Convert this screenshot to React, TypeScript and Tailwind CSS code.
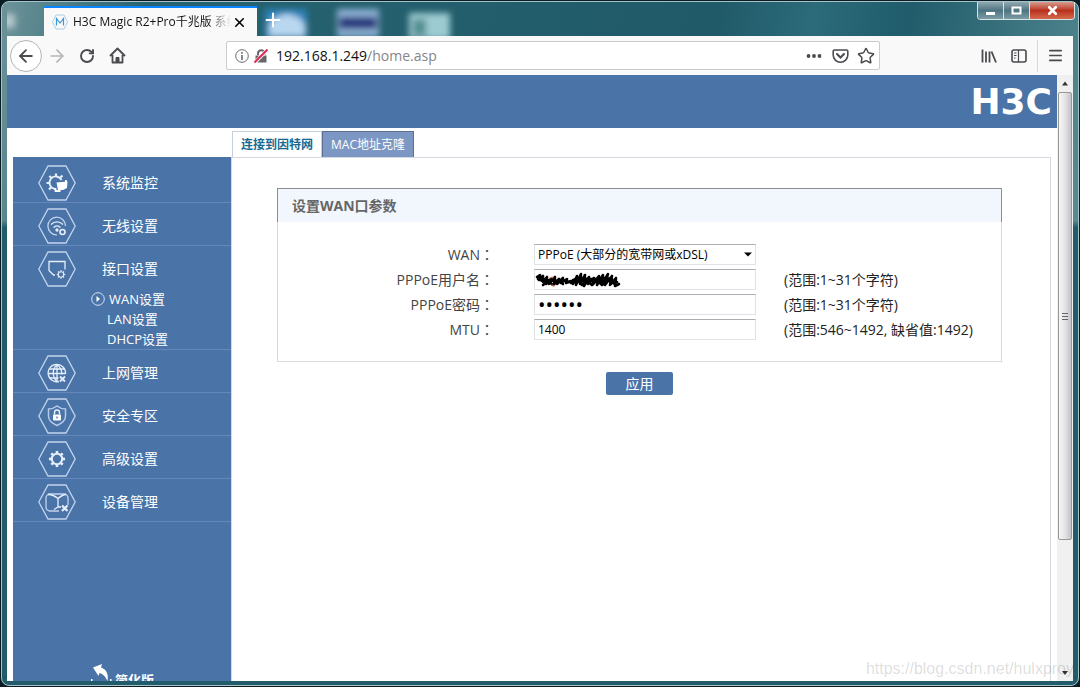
import React, { ReactNode, useState } from "react";
import { ArrowLeft, ArrowRight, Menu, Plus, RotateCw, Star, X } from "lucide-react";

const gearTeeth = [0, 45, 90, 135, 180, 225, 270, 315];

const Gear = ({ x, y, r }: { x: number; y: number; r: number }) => (
  <g transform={`translate(${x} ${y})`}>
    <circle r={r} fill="none" strokeWidth={r * 0.4} />
    {gearTeeth.map((angle) => (
      <path
        key={angle}
        d={`M0 ${-r * 1.1}V${-r * 1.55}`}
        strokeWidth={r * 0.5}
        transform={`rotate(${angle})`}
      />
    ))}
  </g>
);

const HexIcon = ({ children }: { children: ReactNode }) => (
  <svg
    width="38"
    height="36"
    viewBox="0 0 38 36"
    fill="none"
    stroke="#e6eefa"
    strokeWidth="1.3"
    aria-hidden="true"
  >
    <path d="M.8 18 10 1h18l9.200 17L28 35H10Z" stroke="#c3d4ee" />
    {children}
  </svg>
);

const menuIcons: Record<string, ReactNode> = {
  monitor: (
    <>
      <path d="M23.500 15a6.300 6.300 0 1 0-6.500 9" strokeWidth="1.800" />
      <path
        d="M18 11.500V8.500M13.500 13l-2.200-2M11.500 18H8.500M13 22.500 11 24.500M22.500 12.500l2-2"
        strokeWidth="2.200"
      />
      <path d="M18.500 17.500 29.500 16.500l-.5 6.500-4 2h-5Z" fill="#fff" stroke="none" />
      <path d="M17.500 23v3h5M28 15v3" stroke="#fff" strokeWidth="1.800" />
    </>
  ),
  wifi: (
    <>
      <path d="M27.500 18A8.800 8.800 0 1 0 19 26.800" stroke="#c3d4ee" />
      <path d="M13 16.500c3.500-3.500 8.500-3.500 12 0M15.500 19.500c2-2 5-2 7 0" />
      <circle cx="19" cy="22" r="1" fill="#fff" />
      <circle cx="24.500" cy="24" r="2.500" strokeWidth="1.600" />
    </>
  ),
  port: (
    <>
      <path d="M27 18.500V10.500H11V19.500l4.500 4.500h1.500" />
      <Gear x={23} y={23.5} r={2.7} />
    </>
  ),
  globe: (
    <>
      <path d="M27.500 19A8.700 8.700 0 1 0 21 26.500" />
      <path d="M19 9.500V27M19 9.500c-5 5-5 12 0 17.500M19 9.500c4 3 5 7 4.500 10M11.500 14h15M10.500 18.500h17M11.500 23h9" />
      <path d="m22 21.500 5 5M27 21.500l-5 5" strokeWidth="1.800" />
    </>
  ),
  shield: (
    <>
      <path
        d="M19 8c2.500 2 5 3 8.500 3v7c0 4-4 7.500-8.500 9.500-4.500-2-8.500-5.500-8.500-9.500v-7C14 11 16.500 10 19 8Z"
        stroke="#b6cae9"
        strokeWidth="1.500"
      />
      <path d="M16.500 16.500v-2a2.500 2.500 0 0 1 5 0v2" strokeWidth="1.500" />
      <rect x="15" y="16.500" width="8" height="6" rx="1" fill="#fff" stroke="none" />
      <path d="M19 18.500v2" stroke="#4a73a7" />
    </>
  ),
  gear: <Gear x={19} y={18} r={5.2} />,
  device: (
    <>
      <path
        d="M21 27h-9a4 4 0 0 1-4-4v-9a4 4 0 0 1 4-4h14a4 4 0 0 1 4 4v7"
        stroke="#c3d4ee"
      />
      <path d="M10 10.500c4 0 7 1.500 10 4 3-2.500 5-4 8-4M20 14.500V23M20 23l-4 2.500M20 23h3" />
      <path d="m24 21.500 5.500 5.500M29.500 21.500 24 27" strokeWidth="2.200" />
    </>
  ),
};

const menu = [
  { label: "系统监控", icon: "monitor" },
  { label: "无线设置", icon: "wifi" },
  { label: "接口设置", icon: "port", children: ["WAN设置", "LAN设置", "DHCP设置"] },
  { label: "上网管理", icon: "globe" },
  { label: "安全专区", icon: "shield" },
  { label: "高级设置", icon: "gear" },
  { label: "设备管理", icon: "device" },
];

const TitleBar = () => (
  <div className="relative flex h-[34px] shrink-0 items-start">
    <svg className="absolute inset-0 h-full w-full" aria-hidden="true">
      <defs>
        <filter id="soft" x="-30%" y="-30%" width="160%" height="160%">
          <feGaussianBlur stdDeviation="3" />
        </filter>
      </defs>
      <g filter="url(#soft)">
        <path d="M-6 12h14v14H-6Z" fill="#d4e0e2" opacity=".7" />
        <rect x="258" y="7" width="42" height="30" fill="#2b83bb" />
        <path d="M262 22q18-20 36 0v12h-36Z" fill="#b9d8f0" />
        <rect x="330" y="7" width="42" height="28" fill="#8db0d4" />
        <path d="M332 15h38v12h-38Z" fill="#25387c" />
        <rect x="402" y="11" width="41" height="26" fill="#9ccbd2" />
        <path d="M406 17h13v17h-13Z" fill="#538f92" />
      </g>
    </svg>

    <div className="relative ml-[37px] mt-1 flex h-[30px] w-[213px] items-center border-t-2 border-[#0a84ff] bg-[#f9f9fa] pl-2">
      <svg width="16" height="18" viewBox="0 0 16 18" fill="none" aria-hidden="true">
        <path d="M4 2h8l3.500 7-3.500 7H4L.5 9Z" stroke="#a9cfe9" />
        <path d="M4.500 12.500v-7L8 10l3.500-4.500v7" stroke="#3f97d2" strokeWidth="1.200" />
      </svg>
      <span className="ml-[5px] w-[158px] overflow-hidden text-xs whitespace-nowrap text-[#111] [mask-image:linear-gradient(to_right,black_84%,transparent)]">
        H3C Magic R2+Pro千兆版 系统
      </span>
      <button aria-label="关闭标签页" className="ml-px">
        <X size={15} strokeWidth={2.5} />
      </button>
    </div>
    <button aria-label="新建标签页" className="relative ml-[5px] mt-[7px] text-white">
      <Plus size={22} strokeWidth={2.2} />
    </button>

    <div className="relative -mr-0.5 ml-auto flex h-[18px] overflow-hidden rounded-b border border-t-0 border-[#d6e2e5]">
      <button
        aria-label="最小化"
        className="flex w-[26px] items-center justify-center border-r border-[#d6e2e5] bg-linear-to-b from-[#91a9b0] via-[#4e7482] to-[#7d9da6]"
      >
        <svg width="11" height="10" viewBox="0 0 11 10">
          <path d="M1 6h9v3H1Z" fill="#fff" />
        </svg>
      </button>
      <button
        aria-label="最大化"
        className="flex w-[26px] items-center justify-center border-r border-[#d6e2e5] bg-linear-to-b from-[#91a9b0] via-[#4e7482] to-[#7d9da6]"
      >
        <svg width="11" height="10" viewBox="0 0 11 10" fill="none">
          <path d="M1.500 1.500h8v6h-8Z" stroke="#fff" strokeWidth="2" />
        </svg>
      </button>
      <button
        aria-label="关闭"
        className="flex w-11 items-center justify-center bg-linear-to-b from-[#d59a8e] via-[#b92f1c] to-[#d4694c] text-white"
      >
        <X size={13} strokeWidth={5} />
      </button>
    </div>
  </div>
);

const Toolbar = () => (
  <div className="flex h-[39px] shrink-0 items-center bg-[#f9f9fa] text-[#4a4a4f]">
    <button
      aria-label="后退"
      className="ml-[3px] flex size-8 items-center justify-center rounded-full border border-[#b5b5b6] bg-white"
    >
      <ArrowLeft size={20} strokeWidth={2.2} />
    </button>
    <button aria-label="前进" className="flex w-[30px] justify-center text-[#b5b5b8]">
      <ArrowRight size={20} />
    </button>
    <button aria-label="刷新" className="flex w-[30px] justify-center">
      <RotateCw size={16} strokeWidth={2.8} />
    </button>
    <button aria-label="主页" className="flex w-[30px] justify-center">
      <svg width="17" height="17" viewBox="0 0 17 17" fill="none" stroke="currentColor" strokeWidth="1.800">
        <path d="m1 9 7.500-7.500L16 9M3.500 8v7.500h10V8" strokeLinejoin="round" />
        <path d="M7 15v-4.500h3V15Z" fill="currentColor" strokeWidth="1" />
      </svg>
    </button>

    <div className="ml-[94px] flex h-[29px] flex-1 items-center rounded-xs border border-[#cbcbcc] bg-white px-2">
      <svg width="14" height="14" viewBox="0 0 14 14" fill="none" stroke="#6a6a6e" aria-hidden="true">
        <circle cx="7" cy="7" r="6.300" />
        <path d="M7 6v5M7 3v1.800" strokeWidth="1.600" />
      </svg>
      <svg className="ml-1" width="16" height="16" viewBox="0 0 16 16" fill="none" aria-hidden="true">
        <path d="M5 7V5a3.300 3.300 0 0 1 6.500 0v2" stroke="#66666a" strokeWidth="2" />
        <path d="M2.500 7.500h11v7h-11Z" fill="#66666a" />
        <path d="M1 15.500 15 1" stroke="#fff" strokeWidth="3.500" />
        <path d="M1.500 14.500 14.500 1.500" stroke="#e22850" strokeWidth="2" />
      </svg>
      <div className="ml-[7px] flex-1 text-sm text-[#111]">
        192.168.1.249<span className="text-[#858589]">/home.asp</span>
      </div>
      <button aria-label="页面操作">
        <svg width="16" height="16" viewBox="0 0 16 16" fill="currentColor">
          <circle cx="2.500" cy="8" r="1.900" />
          <circle cx="8" cy="8" r="1.900" />
          <circle cx="13.500" cy="8" r="1.900" />
        </svg>
      </button>
      <button aria-label="保存到 Pocket" className="ml-[10px]">
        <svg width="17" height="16" viewBox="0 0 17 16" fill="none" stroke="currentColor" strokeWidth="1.600">
          <path d="M2.500 2h12a1.300 1.300 0 0 1 1.300 1.300V7a7.300 7.300 0 0 1-14.600 0V3.300A1.300 1.300 0 0 1 2.500 2Z" />
          <path d="m5 6 3.500 3.500L12 6" strokeWidth="2" strokeLinecap="round" />
        </svg>
      </button>
      <button aria-label="添加书签" className="ml-2 -mr-1">
        <Star size={18} />
      </button>
    </div>

    <button aria-label="我的足迹" className="ml-[94px] flex w-[30px] justify-center">
      <svg width="16" height="16" viewBox="0 0 16 16" fill="none" stroke="currentColor" strokeWidth="1.800">
        <path d="M1.500 1.500v13M5 3.500v11M8.500 3.500v11M10.500 3.500l4.500 11" />
      </svg>
    </button>
    <button aria-label="侧栏" className="mr-[3px] flex w-[30px] justify-center">
      <svg width="16" height="14" viewBox="0 0 16 14" fill="none" stroke="currentColor" strokeWidth="1.600">
        <rect x="1" y="1" width="14" height="12" rx="2" />
        <path d="M7.500 1v12M3 4h2.500M3 6.500h2.500M3 9h1.500" strokeWidth="1.200" />
      </svg>
    </button>
    <button
      aria-label="打开菜单"
      className="flex h-8 w-9 items-center justify-center border-l border-[#d7d7db]"
    >
      <Menu size={17} strokeWidth={2.4} />
    </button>
  </div>
);

const Sidebar = () => (
  <nav className="ml-[6px] flex w-[218px] shrink-0 flex-col overflow-hidden bg-[#4a73a7] pt-[3px] text-white">
    {menu.map((item) => (
      <div key={item.label} className="border-b border-[#6488bb]">
        <a href="#" className="flex h-[42px] items-center pt-1 pl-[25px] text-sm">
          <HexIcon>{menuIcons[item.icon]}</HexIcon>
          <span className="ml-[26px]">{item.label}</span>
        </a>
        {item.children && (
          <ul className="pt-px text-[13px] leading-5">
            {item.children.map((child, i) => (
              <li key={child}>
                <a href="#" className="flex items-center pl-[78px]">
                  {i === 0 ? (
                    <svg className="mr-1" width="14" height="14" viewBox="0 0 14 14" aria-hidden="true">
                      <circle cx="7" cy="7" r="6.300" fill="none" stroke="#d7e3f5" />
                      <path d="m5.500 4 3.500 3-3.500 3Z" fill="#fff" />
                    </svg>
                  ) : (
                    <span className="w-4" />
                  )}
                  {child}
                </a>
              </li>
            ))}
          </ul>
        )}
      </div>
    ))}
    <a href="#" className="mt-auto flex h-[18px] shrink-0 items-start pl-[78px] text-[13px] font-bold">
      <svg width="22" height="22" viewBox="0 0 22 22" className="shrink-0" aria-hidden="true">
        <path d="M2 4.500 11 1 10 4.500C15 6 18 11 16.500 18 14 13 12 11 8.500 10L7.500 13Z" fill="#fff" />
        <path d="M0 16h1.500v3H0ZM19 16h1.500v3H19Z" fill="#fff" />
      </svg>
      <span className="mt-2 ml-[2px]">简化版</span>
    </a>
  </nav>
);

const fieldClass =
  "block h-[21px] w-full border border-[#e0e2e6] border-t-[#abadb3] bg-white px-[3px] text-black outline-none";

const Row = ({
  id,
  label,
  hint,
  children,
}: {
  id: string;
  label: string;
  hint?: string;
  children: ReactNode;
}) => (
  <div className="grid h-[25px] grid-cols-[256px_222px_1fr] items-center text-sm">
    <label htmlFor={id} className="pr-10 text-right text-[#444]">
      {label}
      <span className="font-['Noto_Sans_CJK_TC',sans-serif] leading-none">：</span>
    </label>
    <div className="relative">{children}</div>
    <span className="pl-7 whitespace-nowrap text-[#222]">{hint}</span>
  </div>
);

const WanForm = () => {
  const [mode, setMode] = useState("pppoe");
  const [user, setUser] = useState("");
  const [password, setPassword] = useState("123456");
  const [mtu, setMtu] = useState("1400");

  return (
    <form className="mr-12 ml-[45px] mt-[30px]" onSubmit={(e) => e.preventDefault()}>
      <div className="border border-[#d9d9d9]">
        <h2 className="-mx-px -mt-px flex h-[34px] items-center border border-b-0 border-[#8b8d92] bg-[#f2f7fe] pl-[14px] text-sm font-bold text-[#666]">
          设置WAN口参数
        </h2>
        <div className="pt-5 pb-[19px]">
          <Row id="wan" label="WAN">
            <select
              id="wan"
              value={mode}
              onChange={(e) => setMode(e.target.value)}
              className={`${fieldClass} appearance-none text-xs`}
            >
              <option value="pppoe">PPPoE (大部分的宽带网或xDSL)</option>
            </select>
            <svg
              className="pointer-events-none absolute top-2 right-1"
              width="8"
              height="5"
              viewBox="0 0 8 5"
              aria-hidden="true"
            >
              <path d="M0 .5h8l-4 4Z" />
            </svg>
          </Row>
          <Row id="user" label="PPPoE用户名" hint="(范围:1~31个字符)">
            <input
              id="user"
              value={user}
              onChange={(e) => setUser(e.target.value)}
              className={`${fieldClass} text-xs`}
            />
            {/* hand-drawn scribble that hides the account name */}
            <svg
              className="pointer-events-none absolute top-[3px] left-px"
              width="86"
              height="16"
              viewBox="0 0 86 16"
              fill="none"
              stroke="#000"
              strokeWidth="2.600"
              strokeLinecap="round"
              strokeLinejoin="round"
              aria-hidden="true"
            >
              <path d="M2 5 5 3 4 8 8 4 8 10 12 5 11 12 16 7 14 12 20 5 19 12 24 7 22 12 28 6 26 11 32 7 31 11 36 9 38 12 42 4 41 13 46 2 45 12 50 3 49 14 54 5 53 12 59 6 58 12 64 4 62 13 68 3 67 12 73 2 70 13 77 4 75 13 81 6 80 14 84 12" />
              <path d="M3 7 8 9 14 8 20 9 27 8 34 10 41 8 47 9 55 7 62 10 69 7 75 9 82 10M8 13l5-4 5 4 5-5 5 4M36 11l6-4 5 6 5-5 5 5 5-5 5 5 6-5 7 4M38 8l7-2 8 1 8 0 8-1 8 1" />
              <path d="m17 13 2 1M15 6l3-1" stroke="#d4643d" strokeWidth="1.200" />
            </svg>
          </Row>
          <Row id="password" label="PPPoE密码" hint="(范围:1~31个字符)">
            <input
              id="password"
              type="password"
              value={password}
              onChange={(e) => setPassword(e.target.value)}
              className={`${fieldClass} text-xl`}
            />
          </Row>
          <Row id="mtu" label="MTU" hint="(范围:546~1492, 缺省值:1492)">
            <input
              id="mtu"
              value={mtu}
              onChange={(e) => setMtu(e.target.value)}
              className={`${fieldClass} text-xs`}
            />
          </Row>
        </div>
      </div>
      <button
        type="submit"
        className="mx-auto mt-[10px] flex h-[23px] w-[67px] items-center justify-center rounded-xs bg-[#4a73a7] text-sm text-white"
      >
        应用
      </button>
    </form>
  );
};

const Scrollbar = () => (
  <div className="flex w-4 shrink-0 flex-col items-center bg-[#f0f0f0]" aria-hidden="true">
    <svg width="8" height="17" viewBox="0 0 8 17">
      <path d="m1 10.500 3-4 3 4Z" fill="#333" />
    </svg>
    <div className="flex w-[14px] flex-[448_0_0%] flex-col items-center justify-center gap-px rounded-xs border border-[#979797] bg-linear-to-r from-[#f6f6f6] via-[#e4e4e6] to-[#c3c3c8]">
      <i className="h-px w-[6px] bg-[#666]" />
      <i className="mt-px h-px w-[6px] bg-[#666]" />
      <i className="mt-px h-px w-[6px] bg-[#666]" />
    </div>
    <div className="flex-[124_0_0%]" />
    <svg width="8" height="17" viewBox="0 0 8 17">
      <path d="m1 7 3 4 3-4Z" fill="#333" />
    </svg>
  </div>
);

const App = () => {
  return (
    <div className="h-screen overflow-hidden bg-[#0b1c24] p-px font-['Open_Sans','Noto_Sans_CJK_SC',sans-serif]">
      <div className="relative flex h-full flex-col rounded-lg border border-[#a5c3c8] bg-[linear-gradient(to_bottom,transparent_32%,#225c6b_33%),linear-gradient(100deg,#6d9399_0%,#276370_12%,#205a69_60%,#2c6b7a_68%,#205c6b_76%,#4a808a_90%,#7da3a8_100%)] px-[5px] pb-1">
        <TitleBar />
        <Toolbar />
        <div className="flex min-h-0 flex-1">
          <div className="flex min-w-0 flex-1 flex-col bg-white">
            <header className="flex h-[53px] shrink-0 items-center justify-end bg-[#4a73a7] pr-[5px]">
              <span className="font-['DejaVu_Sans',sans-serif] text-4xl leading-none font-bold text-white">
                H3C
              </span>
            </header>
            <div className="flex h-[29px] shrink-0 items-end pl-[225px] text-xs">
              <a
                href="#"
                className="flex h-[26px] items-center border border-b-0 border-[#c5d0df] px-2 font-bold text-[#17698f]"
              >
                连接到因特网
              </a>
              <a
                href="#"
                className="flex h-[26px] items-center border border-b-0 border-[#5c7093] bg-[#7d97c4] px-2 text-white"
              >
                MAC地址克隆
              </a>
            </div>
            <div className="flex min-h-0 flex-1">
              <Sidebar />
              <main className="mr-[6px] flex-1 border-t border-r border-l border-[#d5d9df]">
                <WanForm />
              </main>
            </div>
          </div>
          <Scrollbar />
        </div>
        <span className="pointer-events-none absolute right-1 bottom-1 font-['Liberation_Sans',sans-serif] text-base text-black/15">
          https://blog.csdn.net/hulxproy
        </span>
      </div>
    </div>
  );
};

export default App;
